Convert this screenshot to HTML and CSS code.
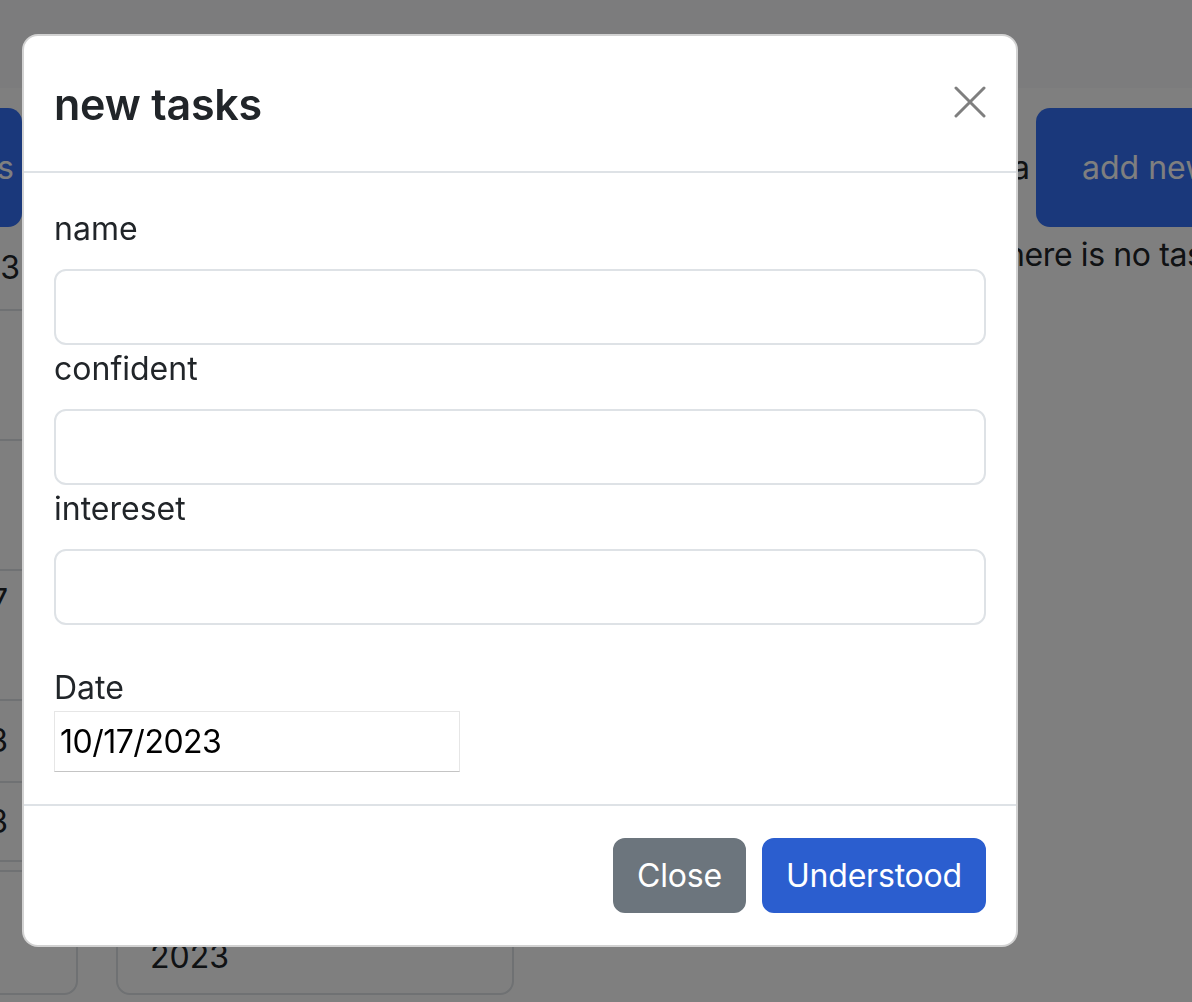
FILE: index.html
```html
<!DOCTYPE html>
<html lang="en">
<head>
<meta charset="utf-8">
<title>new tasks</title>
<link rel="stylesheet" href="styles.css">
</head>
<body>
<div class="page">
  <nav class="navbar"></nav>
  <main class="main">
    <div class="top-row">
      <section class="left-col">
        <button class="btn-blue left-btn" type="button">all tasks</button>
        <div class="table">
          <div class="row r1"><span>10/17/2023</span></div>
          <div class="row r2"><span></span></div>
          <div class="row r3"><span></span></div>
          <div class="row r4"><span>10/17</span></div>
          <div class="row r5"><span>2023</span></div>
          <div class="row r6"><span>2023</span></div>
        </div>
      </section>
      <section class="mid-col"></section>
      <section class="right-col">
        <div class="right-head">
          <span class="head-text">a</span>
          <button class="btn-blue add-btn" type="button">add new task</button>
        </div>
        <p class="empty">there is no tasks</p>
      </section>
    </div>
    <div class="cards-row">
      <div class="card card-a"><span>2023</span></div>
      <div class="card card-b"><span>10/17/</span><span>2023</span></div>
    </div>
  </main>
</div>

<div class="backdrop"></div>

<div class="modal">
  <div class="modal-header">
    <h5 class="modal-title">new tasks</h5>
    <button class="btn-close" type="button" aria-label="Close">
      <svg width="32" height="32" viewBox="0 0 32 32"><path d="M2 2 L30 30 M30 2 L2 30" stroke="#000" stroke-opacity="0.5" stroke-width="3" stroke-linecap="round" fill="none"/></svg>
    </button>
  </div>
  <div class="modal-body">
    <label class="form-label">name</label>
    <input class="form-control" type="text">
    <label class="form-label">confident</label>
    <input class="form-control" type="text">
    <label class="form-label">intereset</label>
    <input class="form-control" type="text">
    <label class="form-label date-label">Date</label>
    <input class="date-input" type="text" value="10/17/2023">
  </div>
  <div class="modal-footer">
    <button class="btn btn-secondary" type="button">Close</button>
    <button class="btn btn-primary" type="button">Understood</button>
  </div>
</div>
</body>
</html>
```

FILE: styles.css
```css
* { box-sizing: border-box; }

html, body {
  margin: 0;
  padding: 0;
  width: 1192px;
  height: 1002px;
  overflow: hidden;
  background: #fff;
  font-family: Inter, "Noto Sans", "Liberation Sans", sans-serif;
  font-size: 32px;
  line-height: 48px;
  color: #212529;
}

.page { width: 1192px; height: 1002px; overflow: hidden; }

.navbar {
  height: 88px;
  background: #f8f9fa;
}

.main {
  margin-left: -278px;
  padding-top: 20px;
}

.top-row {
  display: flex;
  width: 1800px;
}

.left-col {
  width: 300px;
  flex: none;
}

.btn-blue {
  border: none;
  background: #3571f7;
  color: #fff;
  font: inherit;
  border-radius: 14px;
}

.left-btn {
  width: 300px;
  height: 119px;
  text-align: right;
  padding-right: 8px;
}

.row {
  border-bottom: 2px solid #dee2e6;
  display: flex;
  align-items: center;
  justify-content: flex-end;
  padding-right: 2px;
  color: #212529;
}
.row span { white-space: nowrap; }
.r1 { height: 84px; }
.r2, .r3 { height: 130px; }
.r4 { height: 130px; padding-right: 14px; align-items: flex-start; padding-top: 6px; }
.r5 { height: 82px; padding-right: 14px; }
.r6 { height: 79px; padding-right: 14px; }

.mid-col {
  width: 968px;
  flex: none;
}

.right-col {
  width: 500px;
  flex: none;
}

.right-head {
  display: flex;
  align-items: center;
}

.head-text {
  margin-left: 22px;
  width: 24px;
}

.add-btn {
  width: 320px;
  height: 119px;
  text-align: left;
  padding-left: 46px;
}

.empty {
  margin: 4px 0 0;
  padding-left: 6px;
  white-space: nowrap;
  letter-spacing: -0.4px;
}

.cards-row {
  display: flex;
  gap: 38px;
  margin-top: 8px;
}

.card {
  height: 125px;
  border: 2px solid #dee2e6;
  border-radius: 14px;
  display: flex;
  flex-direction: column;
  justify-content: flex-end;
  padding: 0 32px 12px;
}
.card-a { width: 356px; }
.card-b { width: 398px; }

.backdrop {
  position: fixed;
  inset: 0;
  background: rgba(0, 0, 0, 0.5);
}

.modal {
  position: absolute;
  left: 22px;
  top: 34px;
  width: 996px;
  height: 913px;
  background: #fff;
  border: 2px solid rgba(0, 0, 0, 0.175);
  border-radius: 16px;
  display: flex;
  flex-direction: column;
  overflow: hidden;
}

.modal-header {
  height: 137px;
  flex: none;
  display: flex;
  align-items: center;
  justify-content: space-between;
  padding: 0 30px 0 30px;
  border-bottom: 2px solid #dee2e6;
}

.modal-title {
  margin: 0;
  font-size: 43px;
  font-weight: 600;
  line-height: 48px;
  color: #212529;
  letter-spacing: -0.2px;
}

.btn-close {
  border: none;
  background: transparent;
  padding: 0;
  width: 32px;
  height: 32px;
  margin-top: -4px;
  display: flex;
}

.modal-body {
  padding: 32px 30px;
  display: flex;
  flex-direction: column;
  align-items: flex-start;
  border-bottom: 2px solid #dee2e6;
}

.form-label {
  display: block;
  margin-bottom: 16px;
  line-height: 48px;
  color: #212529;
}

.form-control {
  width: 932px;
  height: 76px;
  border: 2px solid #dee2e6;
  border-radius: 12px;
  background: #fff;
  font: inherit;
  padding: 0 24px;
}

.date-label {
  margin-top: 40px;
  margin-bottom: 0;
  line-height: 46px;
}

.date-input {
  width: 406px;
  height: 61px;
  border: 1px solid #e6e6e6;
  border-bottom-color: #c4c4c4;
  border-radius: 0;
  background: #fff;
  font: inherit;
  color: #000;
  padding: 0 5px;
  letter-spacing: -0.5px;
}

.modal-footer {
  flex: 1;
  display: flex;
  justify-content: flex-end;
  align-items: flex-start;
  gap: 16px;
  padding: 32px 30px 0;
}

.btn {
  height: 75px;
  border: 2px solid transparent;
  border-radius: 12px;
  font: inherit;
  color: #fff;
  padding: 0 22px;
  letter-spacing: -0.2px;
}

.btn-secondary { background: #6c757d; border-color: #6c757d; }
.btn-primary { background: #2b5ecf; border-color: #2b5ecf; }
```
